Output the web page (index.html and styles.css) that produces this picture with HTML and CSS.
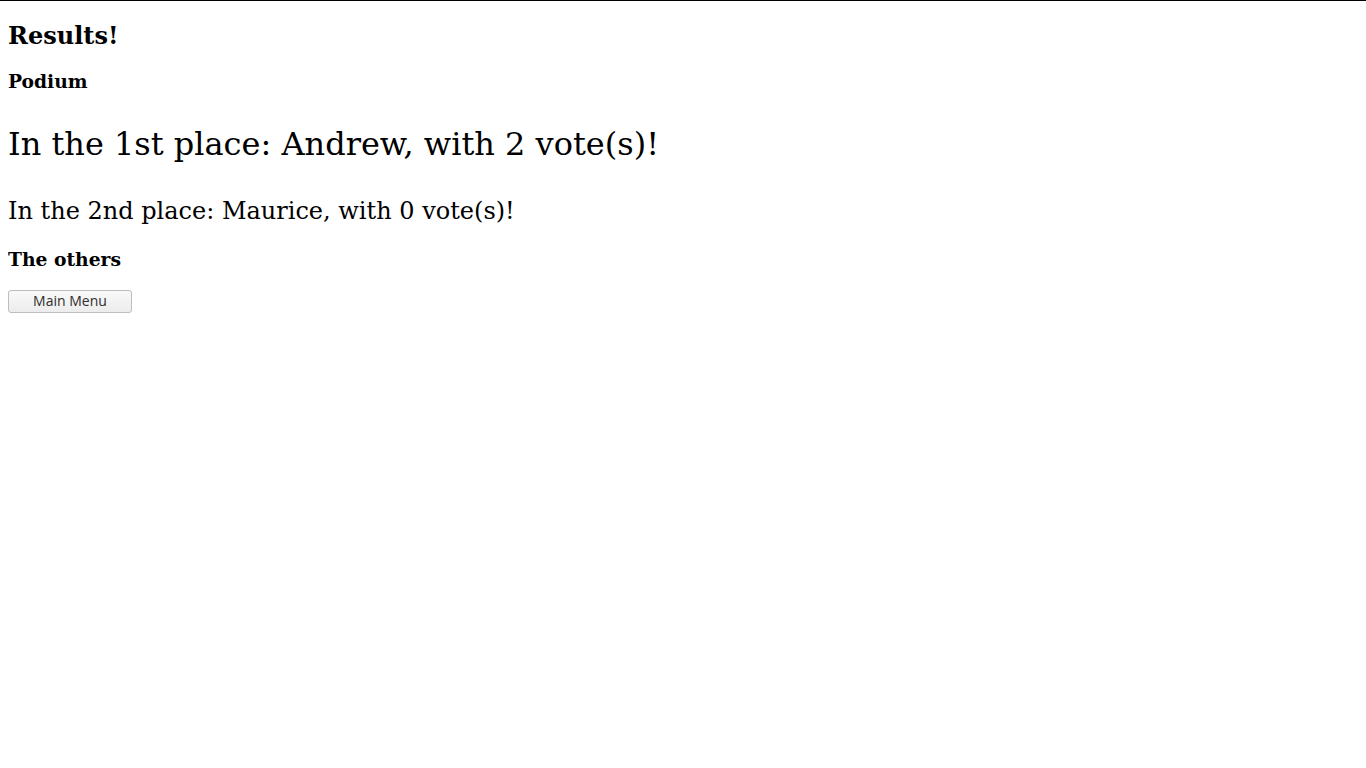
FILE: index.html
```html
<!DOCTYPE html>
<html>
<head>
<meta charset="utf-8">
<link rel="stylesheet" href="styles.css">
</head>
<body>
<h2 class="title">Results!</h2>
<h3 class="section">Podium</h3>
<p class="first">In the 1st place: Andrew, with 2 vote(s)!</p>
<p class="second">In the 2nd place: Maurice, with 0 vote(s)!</p>
<h3 class="section section-last">The others</h3>
<button class="menu-btn">Main Menu</button>
</body>
</html>
```
FILE: styles.css
```css
html {
  border-top: 1px solid #000;
}
body {
  margin: 0 8px 8px;
  font-family: "DejaVu Serif", serif;
  color: #000;
  background: #fff;
}
.title {
  font-size: 24px;
  margin: 19.92px 0;
}
.section {
  font-size: 18.72px;
  margin: 18.72px 0;
}
.section-last {
  margin-bottom: 19.72px;
}
.first {
  font-size: 32px;
  margin: 33px 0 34px;
}
.second {
  font-size: 24px;
  margin: 24px 0 23px;
}
.menu-btn {
  font-family: "Open Sans", "DejaVu Sans", sans-serif;
  font-size: 14px;
  line-height: 1;
  width: 124px;
  height: 23px;
  padding: 0;
  color: #2e2e2e;
  background: linear-gradient(#f9f9f9, #ececec);
  border: 1px solid #bdbdbd;
  border-radius: 3px;
}
```
